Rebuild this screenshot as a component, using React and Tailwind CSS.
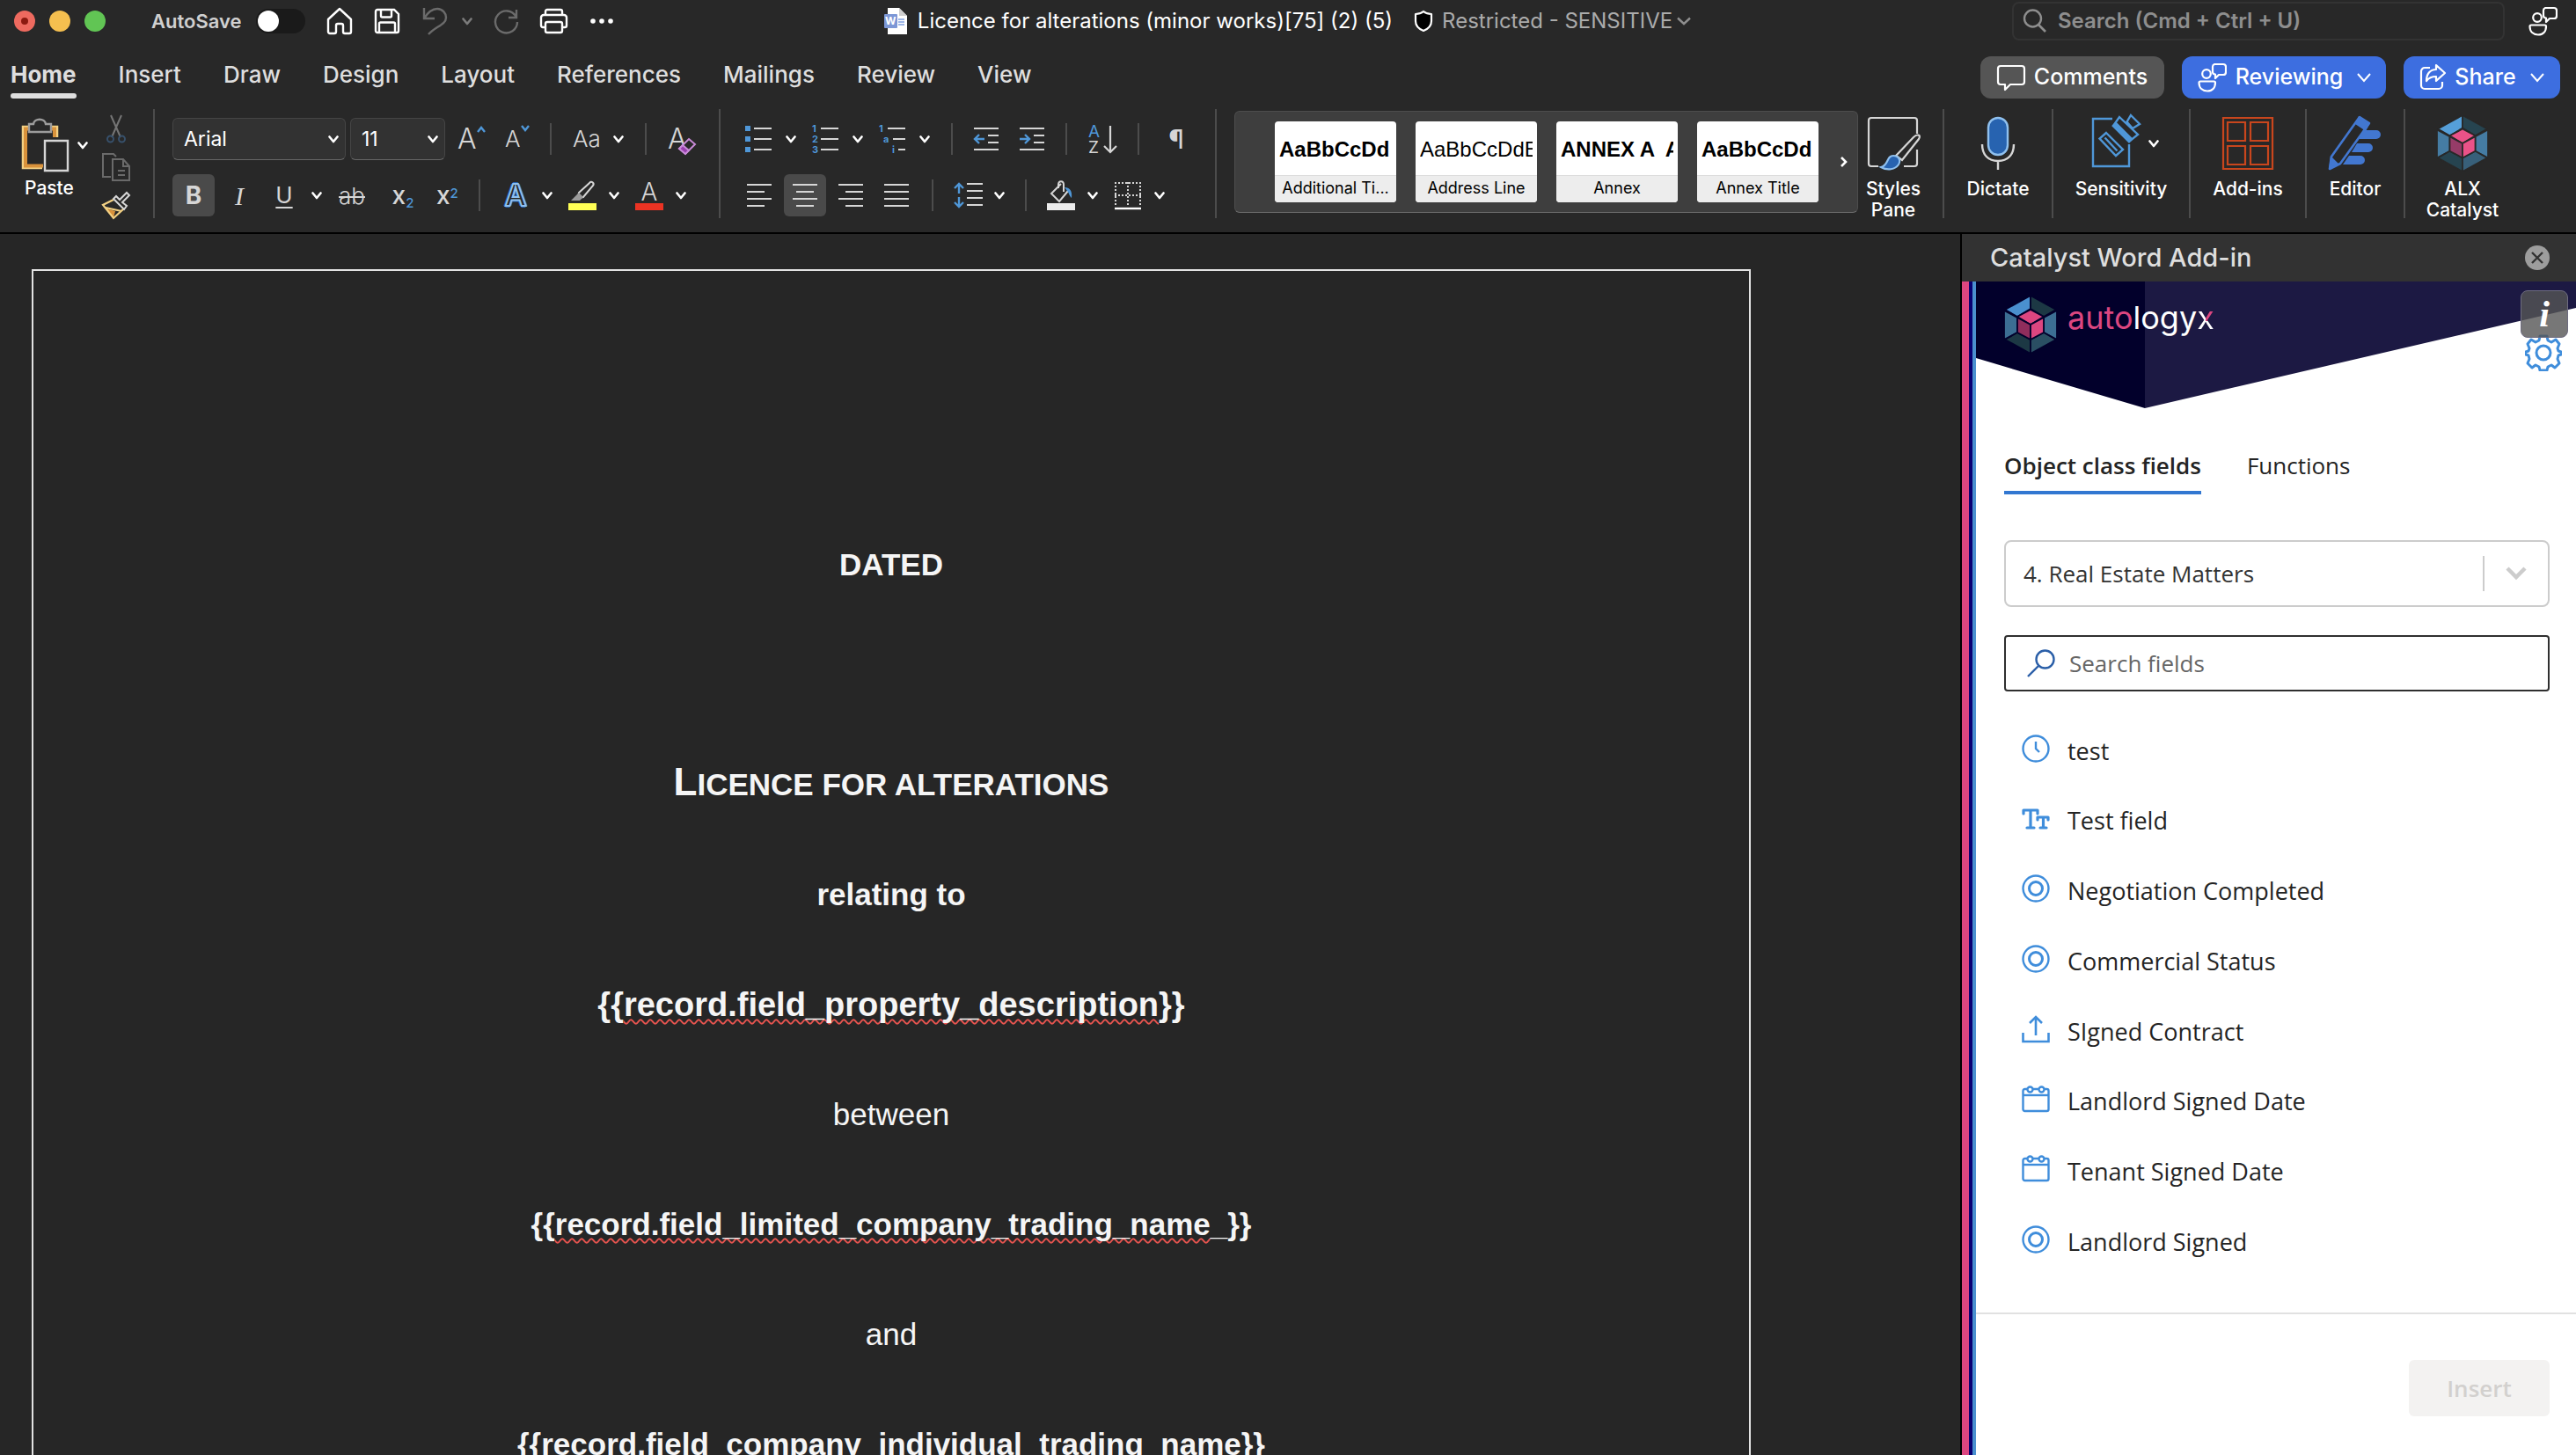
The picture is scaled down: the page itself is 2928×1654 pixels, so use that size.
import clsx from "clsx";

const BLUE = "#4f97d8";
const INK = "#d6d6d6";

/* ---------- shared bits ---------- */

const Chevron = ({ className = "text-white" }) => (
  <svg width="12" height="9" viewBox="0 0 12 9" className={clsx("shrink-0", className)}>
    <path d="M1.5 1.5 6 7l4.500-5.500" fill="none" stroke="currentColor" strokeWidth="2.600" strokeLinecap="round" strokeLinejoin="round" />
  </svg>
);

const Svg = ({ w = 32, h = 32, children, className }) => (
  <svg
    width={w}
    height={h}
    viewBox={`0 0 ${w} ${h}`}
    fill="none"
    stroke={INK}
    strokeWidth="2"
    className={clsx("shrink-0 overflow-visible", className)}
  >
    {children}
  </svg>
);

const Divider = ({ tall }) => (
  <div className={clsx("w-[2px] shrink-0 bg-[#4c4c4c]", tall ? "h-[124px]" : "h-9")} />
);

// icon button with its drop-down arrow
const Split = ({ label, children }) => (
  <button type="button" aria-label={label} className="flex items-center gap-[14px]">
    {children}
    <Chevron />
  </button>
);

const Gem = ({ w, h, gap, colors }) => {
  const [topLeft, topRight, side, low, lowRight, pink, plum] = colors;
  return (
    <svg width={w} height={h} viewBox="0 0 60 66" stroke={gap} strokeWidth="1.800" strokeLinejoin="round" className="shrink-0">
      <path d="M30 0 1 16l14 8 15-9z" fill={topLeft} />
      <path d="M30 0 59 16l-14 8-15-9z" fill={topRight} />
      <path d="M0 17v33l15-8V25z" fill={side} />
      <path d="M60 17v33l-15-8V25z" fill={side} />
      <path d="M1 50l14-8 15 8v16z" fill={low} />
      <path d="M59 50l-14-8-15 8v16z" fill={lowRight} />
      <path d="M30 16 45 24 30 33 15 24z" fill={pink} />
      <path d="M15 25l15 8v17l-15-8z" fill={plum} />
      <path d="M45 25l-15 8v17l15-8z" fill={pink} />
    </svg>
  );
};

const PeopleIcon = ({ className }) => (
  <svg width="34" height="34" viewBox="0 0 34 34" fill="none" stroke="white" strokeWidth="2.200" strokeLinejoin="round" className={className}>
    <circle cx="11" cy="13" r="4.800" />
    <path d="M4 21.500h15.500a1.500 1.500 0 0 1 1.500 1.500c0 6-3.500 9.500-9 9.500S2.500 29 2.500 23a1.500 1.500 0 0 1 1.500-1.500z" />
    <path d="M20 2h10a3 3 0 0 1 3 3v6a3 3 0 0 1-3 3h-5l-4 4v-4.500a3 3 0 0 1-3-3V5a3 3 0 0 1 2-3z" />
  </svg>
);

/* ---------- title bar ---------- */

const TitleBar = () => (
  <div className="grid h-12 grid-cols-[1fr_auto_1fr] items-center">
    <div className="flex items-center pl-4">
      <div className="flex gap-4">
        <span className="flex size-6 items-center justify-center rounded-full bg-[#ee6a5f]">
          <span className="size-2 rounded-full bg-[#8c1a10]" />
        </span>
        <span className="size-6 rounded-full bg-[#f5bf4f]" />
        <span className="size-6 rounded-full bg-[#61c554]" />
      </div>
      <label className="ml-[52px] flex items-center gap-4 text-[22px] font-semibold text-[#d0d0d0]">
        AutoSave
        <input
          type="checkbox"
          className="h-7 w-14 appearance-none rounded-full bg-[#1a1a1a] p-[2px] before:block before:size-6 before:rounded-full before:bg-white before:content-['']"
        />
      </label>
      <div className="ml-6 flex items-center gap-6">
        <button type="button" aria-label="Home">
          <Svg w={30}>
            <path d="M2 14 15 2l13 12v14a2 2 0 0 1-2 2h-5a2 2 0 0 1-2-2v-7a2 2 0 0 0-2-2h-4a2 2 0 0 0-2 2v7a2 2 0 0 1-2 2H4a2 2 0 0 1-2-2z" stroke="white" strokeWidth="2.400" strokeLinejoin="round" />
          </Svg>
        </button>
        <button type="button" aria-label="Save">
          <Svg w={30}>
            <path d="M4 3h19l5 5v19a2 2 0 0 1-2 2H4a2 2 0 0 1-2-2V5a2 2 0 0 1 2-2zM8 3v7a1.500 1.500 0 0 0 1.500 1.500h9A1.500 1.500 0 0 0 20 10V3M6 29V19a1.500 1.500 0 0 1 1.500-1.500h15A1.500 1.500 0 0 1 24 19v10" stroke="white" strokeWidth="2.400" />
          </Svg>
        </button>
        <div className="flex items-center gap-4">
          <button type="button" aria-label="Undo">
            <Svg w={30}>
              <path d="M3 1v12h12M3 13C8 5 13 2 18 2c6 0 10 5 10 10 0 8-12 10-20 19" stroke="#6b6b6b" strokeWidth="2.400" />
            </Svg>
          </button>
          <Chevron className="text-[#7b7b7b]" />
        </div>
        <button type="button" aria-label="Redo">
          <Svg w={28}>
            <path d="M26 3v9h-9M25.500 11A12.500 12.500 0 1 0 27 17" stroke="#6b6b6b" strokeWidth="2.400" />
          </Svg>
        </button>
        <button type="button" aria-label="Print">
          <Svg w={33}>
            <path d="M7 9V5a2 2 0 0 1 2-2h15a2 2 0 0 1 2 2v4M7 23H4a2 2 0 0 1-2-2v-9a3 3 0 0 1 3-3h23a3 3 0 0 1 3 3v9a2 2 0 0 1-2 2h-3M9 17h15a2 2 0 0 1 2 2v8a2 2 0 0 1-2 2H9a2 2 0 0 1-2-2v-8a2 2 0 0 1 2-2z" stroke="white" strokeWidth="2.400" />
          </Svg>
        </button>
        <button type="button" aria-label="More commands">
          <Svg w={28}>
            <g fill="white" stroke="none">
              <circle cx="4" cy="16" r="2.800" />
              <circle cx="14" cy="16" r="2.800" />
              <circle cx="24" cy="16" r="2.800" />
            </g>
          </Svg>
        </button>
      </div>
    </div>

    <div className="flex items-center text-[24px] whitespace-nowrap">
      <span className="relative h-[30px] w-[26px]">
        <svg width="26" height="30" viewBox="0 0 26 30">
          <path d="M4 0h13l9 9v21H4z" fill="white" />
          <path d="M17 0l9 9h-9z" fill="#cfcfcf" />
          <path d="M16 13h7M16 16h7M16 19h7" stroke="#7d9fe0" strokeWidth="1.500" />
          <rect y="7" width="15" height="16" rx="1" fill="#7c97d6" />
        </svg>
        <span className="absolute top-[7px] left-0 w-[15px] text-center text-[12px] leading-4 font-bold text-white">W</span>
      </span>
      <span className="ml-3 text-white">Licence for alterations (minor works)[75] (2) (5)</span>
      <Svg w={22} h={26} className="ml-6">
        <path d="M11 2c3 2.500 6 3 9 3v8c0 5-4 9-9 11-5-2-9-6-9-11V5c3 0 6-.500 9-3z" fill="black" stroke="white" strokeWidth="2.200" strokeLinejoin="round" />
      </Svg>
      <span className="ml-2.5 text-[#ababab]">Restricted - SENSITIVE</span>
      <Svg w={18} h={10} className="ml-1">
        <path d="M2 1.500 9 8l7-6.500" stroke="#8e8e8e" strokeWidth="2.400" />
      </Svg>
    </div>

    <div className="flex items-center justify-end pr-[21px]">
      <label className="flex h-11 w-[560px] items-center gap-3.5 rounded-lg border-2 border-[#333333] pl-2.5">
        <Svg w={26} h={28}>
          <circle cx="11.500" cy="11" r="9.500" stroke="#8e8e8e" strokeWidth="2.400" />
          <path d="M18 18l8 8" stroke="#8e8e8e" strokeWidth="2.600" />
        </Svg>
        <input
          type="search"
          aria-label="Search"
          placeholder="Search (Cmd + Ctrl + U)"
          className="w-full bg-transparent text-[24px] font-semibold outline-none placeholder:text-[#8e8e8e]"
        />
      </label>
      <button type="button" aria-label="Presence" className="ml-[26px]">
        <PeopleIcon />
      </button>
    </div>
  </div>
);

/* ---------- ribbon tabs ---------- */

const tabs = ["Home", "Insert", "Draw", "Design", "Layout", "References", "Mailings", "Review", "View"];

const TabBar = () => (
  <div className="mt-4 flex h-12 items-center justify-between pr-[18px] pl-3">
    <nav className="flex h-12 gap-12 text-[26px] font-medium text-[#dedede]">
      {tabs.map((tab, i) => (
        <a
          key={tab}
          href={`#${tab.toLowerCase()}`}
          className={clsx("flex flex-col justify-between pt-1.5", i === 0 && "font-bold")}
        >
          <span className="leading-[30px]">{tab}</span>
          {i === 0 && <span className="h-1.5 rounded-full bg-[#dedede]" />}
        </a>
      ))}
    </nav>
    <div className="flex gap-5 text-[25px] font-medium text-white">
      <button type="button" className="flex h-12 w-[209px] items-center justify-center gap-2.5 rounded-xl bg-[#555555]">
        <Svg w={32}>
          <path d="M4 3h24a3 3 0 0 1 3 3v15a3 3 0 0 1-3 3H15l-6 6v-6H4a3 3 0 0 1-3-3V6a3 3 0 0 1 3-3z" stroke="white" strokeWidth="2.200" strokeLinejoin="round" />
        </Svg>
        Comments
      </button>
      <button type="button" className="flex h-12 w-[232px] items-center justify-center gap-2.5 rounded-xl bg-[#3d6ee0]">
        <PeopleIcon />
        Reviewing
        <Svg w={16} h={10} className="ml-1.5">
          <path d="M1 1l7 8 7-8" stroke="white" />
        </Svg>
      </button>
      <button type="button" className="flex h-12 w-[178px] items-center justify-center gap-2.5 rounded-xl bg-[#3d6ee0]">
        <Svg w={30}>
          <path d="M12 5H6a4 4 0 0 0-4 4v16a4 4 0 0 0 4 4h16a4 4 0 0 0 4-4v-4" stroke="white" strokeWidth="2.200" />
          <path d="M19 2l10 9-10 9v-5c-5 0-8 1-11 5 0-8 4-13 11-13z" stroke="white" strokeWidth="2.200" strokeLinejoin="round" />
        </Svg>
        Share
        <Svg w={16} h={10} className="ml-1.5">
          <path d="M1 1l7 8 7-8" stroke="white" />
        </Svg>
      </button>
    </div>
  </div>
);

/* ---------- ribbon groups ---------- */

const ClipboardGroup = () => (
  <div className="flex gap-4">
    <button type="button" className="flex flex-col pt-2.5 text-left text-[21px] font-medium text-white">
      <span className="flex items-center gap-2.5">
        <Svg w={54} h={62}>
          <path d="M9 10H2v47h22M34 10h7v12" stroke="#f3d184" strokeWidth="2.500" />
          <path d="M9 12.500H5v42h20M34 12.500h4V22" stroke="#d9923b" strokeWidth="4" />
          <path d="M9 7h5c1-7 13-7 14 0h6v9H9z" stroke="#9c9c9c" strokeWidth="2.400" />
          <path d="M27 26h26v34H27z" strokeWidth="2.400" />
        </Svg>
        <Chevron />
      </span>
      <span className="pl-1 leading-9">Paste</span>
    </button>
    <div className="flex flex-col gap-3 pt-1.5">
      <button type="button" aria-label="Cut">
        <Svg>
          <path d="M10 1l11 25M22 1 11 26" stroke="#757575" />
          <circle cx="9.500" cy="28" r="3.500" stroke="#37506b" />
          <circle cx="22.500" cy="28" r="3.500" stroke="#37506b" />
        </Svg>
      </button>
      <button type="button" aria-label="Copy">
        <Svg>
          <path d="M16 4l-3-3H1v26h9M12 7h12l7 8v16H12zM24 7v8h7M18 20h8M18 25h8" stroke="#6a6a6a" />
        </Svg>
      </button>
      <button type="button" aria-label="Format painter">
        <Svg>
          <path d="M5 19l10 3-2 8z" fill="#d9923b" stroke="none" />
          <path d="M13 9 1 15l12 15 12-11M4 18l18 4" stroke="#f3d184" strokeWidth="2.200" />
          <path d="M13 8l12 12 3-4-5-4 8-8-3-3-8 8-4-4z" />
        </Svg>
      </button>
    </div>
  </div>
);

const selectBox = "h-12 appearance-none rounded-md border border-[#454545] border-b-[#666666] bg-[#323232] pl-3 text-[23px] text-white";

const Picker = ({ label, value, className }) => (
  <span className="relative flex items-center">
    <select aria-label={label} defaultValue={value} className={clsx(selectBox, className)}>
      <option>{value}</option>
    </select>
    <span className="pointer-events-none absolute right-2">
      <Chevron />
    </span>
  </span>
);

const FontGroup = () => (
  <div className="flex flex-col gap-4 pt-2.5">
    <div className="flex h-12 items-center gap-[14px]">
      <div className="flex gap-[5px]">
        <Picker label="Font" value="Arial" className="w-[197px]" />
        <Picker label="Font size" value="11" className="w-[108px]" />
      </div>
      <div className="flex items-center gap-6 text-[#d6d6d6]">
        <button type="button" aria-label="Increase font size" className="flex w-[30px] items-start justify-between">
          <span className="text-[32px] leading-9 font-light">A</span>
          <Svg w={10} h={8} className="mt-1">
            <path d="M1 6l4-5 4 5" stroke={BLUE} strokeWidth="2.400" />
          </Svg>
        </button>
        <button type="button" aria-label="Decrease font size" className="flex w-[27px] items-start justify-between">
          <span className="text-[26px] leading-10 font-light">A</span>
          <Svg w={10} h={8} className="mt-1">
            <path d="M1 1l4 5 4-5" stroke={BLUE} strokeWidth="2.400" />
          </Svg>
        </button>
        <Divider />
        <Split label="Change case">
          <span className="w-8 text-[26px] leading-9 font-light">Aa</span>
        </Split>
        <Divider />
        <button type="button" aria-label="Clear formatting" className="relative flex h-9 w-8">
          <span className="text-[32px] leading-9 font-light">A</span>
          <span className="absolute right-0 bottom-0">
            <Svg w={20} h={20}>
              <path d="M12 2l7 6-11 11-7-6z" fill="#282828" stroke="#c98bd8" />
              <path d="M5 9l7 6-4 4-7-6z" fill="#9a3fb0" stroke="#c98bd8" />
            </Svg>
          </span>
        </button>
      </div>
    </div>
    <div className="flex h-12 items-center gap-[18px] text-[28px] text-[#d6d6d6]">
      <button type="button" aria-label="Bold" className="h-12 w-12 rounded-md bg-[#4a4a4a] text-[28px] font-bold">
        B
      </button>
      <button type="button" aria-label="Italic" className="w-5 font-['Liberation_Serif'] text-[30px] italic">
        I
      </button>
      <Split label="Underline">
        <span className="w-10 pl-1.5 text-center text-[26px] leading-8 underline decoration-2 underline-offset-4">U</span>
      </Split>
      <button type="button" aria-label="Strikethrough" className="w-8 text-[26px] font-light line-through decoration-2">
        ab
      </button>
      <button type="button" aria-label="Subscript" className="w-11 pl-1 font-medium">
        x<sub className="text-[15px] text-[#4f97d8]">2</sub>
      </button>
      <button type="button" aria-label="Superscript" className="w-[30px] text-left font-medium">
        x<sup className="text-[15px] text-[#4f97d8]">2</sup>
      </button>
      <div className="mr-1.5">
        <Divider />
      </div>
      <Split label="Text effects">
        <span className="w-8 text-center text-[34px] leading-8 font-semibold text-[#282828] [-webkit-text-stroke:2px_#8fc0ee] [text-shadow:2px_0_#2763b0,-2px_0_#2763b0,0_2px_#2763b0,0_-2px_#2763b0]">
          A
        </span>
      </Split>
      <Split label="Highlight colour">
        <Svg w={32} h={34}>
          <path d="M12 14 24 3c2-3 6 0 4 3L17 19l-6 1z" />
          <path d="M12 14l5 5-4 4H3z" fill="#9b9b9b" stroke="none" />
          <path d="M0 26h32v8H0z" fill="#ffff54" stroke="none" />
        </Svg>
      </Split>
      <Split label="Font colour">
        <span className="flex w-8 flex-col items-center">
          <span className="text-[28px] leading-[26px] font-light">A</span>
          <span className="h-2 w-8 bg-[#eb3323]" />
        </span>
      </Split>
    </div>
  </div>
);

const alignments = [
  ["Align left", "M0 2h28M0 10h20M0 18h28M0 26h20"],
  ["Centre", "M0 2h28M4 10h20M0 18h28M4 26h20"],
  ["Align right", "M0 2h28M8 10h20M0 18h28M8 26h20"],
  ["Justify", "M0 2h28M0 10h28M0 18h28M0 26h28"],
];

const ListMarks = ({ marks }) => (
  <g fill={BLUE} stroke="none" fontSize="11" fontWeight="700">
    {marks.map(([mark, x, y]) => (
      <text key={mark} x={x} y={y}>
        {mark}
      </text>
    ))}
  </g>
);

const ParagraphGroup = () => (
  <div className="flex flex-col gap-4 pt-2.5">
    <div className="flex h-12 items-center gap-6">
      <div className="flex gap-[18px]">
        <Split label="Bullets">
          <Svg>
            <path d="M0 1h6v6H0zM0 13h6v6H0zM0 25h6v6H0z" fill={BLUE} stroke="none" />
            <path d="M10 4h20M10 16h20M10 28h20" />
          </Svg>
        </Split>
        <Split label="Numbering">
          <Svg>
            <ListMarks marks={[["1", 0, 8], ["2", 0, 20], ["3", 0, 32]]} />
            <path d="M10 4h20M10 16h20M10 28h20" />
          </Svg>
        </Split>
        <Split label="Multilevel list">
          <Svg>
            <ListMarks marks={[["1", 0, 8], ["a", 5, 20], ["i", 15, 32]]} />
            <path d="M10 4h20M16 16h14M22 28h8" />
          </Svg>
        </Split>
      </div>
      <Divider />
      <button type="button" aria-label="Decrease indent">
        <Svg w={28}>
          <path d="M0 4h28M16 12h12M16 20h12M0 28h28" />
          <path d="M12 16H1M6 11l-5 5 5 5" stroke={BLUE} strokeWidth="2.400" />
        </Svg>
      </button>
      <button type="button" aria-label="Increase indent">
        <Svg w={28}>
          <path d="M0 4h28M16 12h12M16 20h12M0 28h28" />
          <path d="M0 16h11M6 11l5 5-5 5" stroke={BLUE} strokeWidth="2.400" />
        </Svg>
      </button>
      <Divider />
      <button type="button" aria-label="Sort">
        <Svg w={32} h={34}>
          <g stroke="none" fontSize="19">
            <text x="0" y="15" fill={BLUE}>A</text>
            <text x="0" y="33" fill={INK}>Z</text>
          </g>
          <path d="M25 2v30M18 25l7 7 7-7" strokeWidth="2.200" />
        </Svg>
      </button>
      <Divider />
      <button type="button" aria-label="Show formatting marks" className="w-9 text-[30px] leading-9 text-[#d6d6d6]">
        ¶
      </button>
    </div>
    <div className="-ml-2 flex h-12 items-center gap-4">
      <div className="flex gap-1">
        {alignments.map(([name, d]) => (
          <button
            key={name}
            type="button"
            aria-label={name}
            className={clsx("flex size-12 items-center justify-center rounded-md", name === "Centre" && "bg-[#4a4a4a]")}
          >
            <Svg w={28} h={28}>
              <path d={d} />
            </Svg>
          </button>
        ))}
      </div>
      <div className="flex items-center gap-[23px]">
        <Divider />
        <Split label="Line spacing">
          <Svg>
            <path d="M6 3v11M1 8l5-5 5 5M6 18v11M1 24l5 5 5-5" stroke={BLUE} strokeWidth="2.400" />
            <path d="M15 3h18M15 11h18M15 19h18M15 27h18" />
          </Svg>
        </Split>
        <Divider />
        <div className="flex gap-[18px]">
          <Split label="Shading">
            <Svg w={32} h={34}>
              <path d="M16 4 5 15l9 9 10-12M13 9V5c0-5 6-5 6 0v8" />
              <path d="M20 8c6 0 9 4 8 12-3-3-3-6-5-8z" fill={BLUE} stroke="none" />
              <path d="M0 26h32v8H0z" fill="#ececec" stroke="none" />
            </Svg>
          </Split>
          <Split label="Borders">
            <Svg>
              <path d="M1 2h30M1 16h30M2 1v26M16 1v26M30 1v26" strokeDasharray="2 2" />
              <path d="M1 31h30" stroke="white" strokeWidth="2.400" />
            </Svg>
          </Split>
        </div>
      </div>
    </div>
  </div>
);

const styles = [
  { name: "Additional Ti...", sample: "AaBbCcDd", bold: true },
  { name: "Address Line", sample: "AaBbCcDdEe" },
  { name: "Annex", sample: "ANNEX A  A", bold: true },
  { name: "Annex Title", sample: "AaBbCcDd", bold: true },
];

const StyleGallery = () => (
  <div className="mt-[2px] mr-2 ml-5 flex h-[116px] flex-1 items-center justify-between rounded-md border border-[#4d4d4d] border-b-[#6a6a6a] bg-[#3e3e3e] pr-2.5 pl-[45px]">
    <div className="flex gap-[22px]">
      {styles.map(({ name, sample, bold }) => (
        <button key={name} type="button" className="flex h-[92px] w-[138px] flex-col rounded-sm bg-white text-black">
          <span
            className={clsx(
              "mx-[5px] h-[61px] overflow-hidden pt-4 text-left font-['Liberation_Sans'] text-[24px] leading-[32px] whitespace-pre",
              bold && "font-bold",
            )}
          >
            {sample}
          </span>
          <span className="w-full flex-1 rounded-b-sm border-t border-[#dddddd] bg-[#ededed] text-[18px] leading-[28px]">{name}</span>
        </button>
      ))}
    </div>
    <button type="button" aria-label="More styles">
      <Svg w={10} h={14}>
        <path d="M2 2l5 5-5 5" stroke="white" strokeWidth="2.600" />
      </Svg>
    </button>
  </div>
);

const BigButton = ({ icon, label, className }) => (
  <button
    type="button"
    className={clsx("flex flex-col items-center pt-1.5 text-[21px] leading-6 font-medium text-white", className)}
  >
    <span className="mb-[7px] flex h-[66px] items-center gap-2.5">{icon}</span>
    {label}
  </button>
);

const ribbonGem = ["#559fd9", "#264450", "#457ca3", "#264450", "#38607a", "#ea5288", "#963c68"];
const logoGem = ["#4a90cf", "#1c3844", "#3c6e93", "#1c3844", "#2a4f63", "#dc4680", "#8f2d5c"];

const ToolButtons = () => (
  <div className="flex gap-6 pr-[88px]">
    <BigButton
      className="w-16"
      label="Styles Pane"
      icon={
        <Svg w={62} h={62}>
          <path d="M14 57H6a3 3 0 0 1-3-3V5a3 3 0 0 1 3-3h49a3 3 0 0 1 3 3v15M58 38v16a3 3 0 0 1-3 3H43" strokeWidth="2.200" />
          <path d="M34 45l20-21c4-4 9-3 6 2L41 50z" strokeWidth="2.200" />
          <path d="M17 58c9-2 6-13 14-13 6 0 9 5 6 10-4 6-13 7-20 3z" fill="#2763b0" stroke="#8fc0ee" strokeWidth="2.200" />
        </Svg>
      }
    />
    <Divider tall />
    <BigButton
      className="w-[74px]"
      label="Dictate"
      icon={
        <Svg w={40} h={62}>
          <rect x="9" y="2" width="22" height="42" rx="11" fill="#2763b0" stroke="#8fc0ee" strokeWidth="2.400" />
          <path d="M2 32c0 12 7 19 18 19s18-7 18-19M20 51v10" strokeWidth="2.400" />
        </Svg>
      }
    />
    <Divider tall />
    <BigButton
      className="w-[106px]"
      label="Sensitivity"
      icon={
        <>
          <Svg w={54} h={64} className="ml-2.5">
            <g stroke={BLUE} strokeWidth="2.400">
              <path d="M23 4H1v54h41V33" />
              <path d="M16 20 35 39l-8 7L8.500 26.500zM14.500 25.500 28.500 40.500" />
              <path d="M31 2 52 22l-10 8L24 12zM44 0l10 10-8 5-6.500-7.500z" />
              <path d="M24 12l3-3 18 18-3 3z" fill={BLUE} />
            </g>
          </Svg>
          <Chevron />
        </>
      }
    />
    <Divider tall />
    <BigButton
      className="w-[82px]"
      label="Add-ins"
      icon={
        <Svg w={58} h={60}>
          <path d="M1 1h56v58H1zM6 6h20v21H6zM32 6h20v21H32zM6 33h20v21H6zM32 33h20v21H32z" stroke="#c9461d" strokeWidth="2.200" />
        </Svg>
      }
    />
    <Divider tall />
    <BigButton
      className="w-[62px]"
      label="Editor"
      icon={
        <Svg w={62} h={64}>
          <g stroke="none" fill="#4277d0">
            <path d="M40 17h15a5 5 0 0 1 0 10H35zM33 32h13a5 5 0 0 1 0 10H27zM24 46h13a5 5 0 0 1 0 10H17z" />
            <path d="M35 1 48 9l-5 9-12-8zM1 62l2-16 10 10z" />
          </g>
          <path d="M36 2l11 7-33 46L2 61l2-14z" stroke="#4277d0" strokeWidth="2.600" strokeLinejoin="round" />
        </Svg>
      }
    />
    <Divider tall />
    <BigButton className="w-[82px]" label="ALX Catalyst" icon={<Gem w={58} h={64} gap="#282828" colors={ribbonGem} />} />
  </div>
);

const Ribbon = () => (
  <div className="flex h-[152px] items-start pt-3 pl-6">
    <ClipboardGroup />
    <div className="mr-5 ml-[26px]">
      <Divider tall />
    </div>
    <FontGroup />
    <div className="mr-7 ml-[26px]">
      <Divider tall />
    </div>
    <ParagraphGroup />
    <div className="ml-[26px]">
      <Divider tall />
    </div>
    <StyleGallery />
    <ToolButtons />
  </div>
);

/* ---------- document ---------- */

const Misspelt = ({ children }) => (
  <span className="underline decoration-[#e8544f] decoration-wavy decoration-2 underline-offset-[3px] [text-decoration-skip-ink:none]">
    {children}
  </span>
);

const Document = () => (
  <main className="flex flex-1 overflow-hidden bg-[#262626] pt-10 pr-[238px] pl-9">
    <article className="flex flex-1 flex-col items-center gap-[85px] border-2 border-b-0 border-[#e2e2e2] pt-[314px] font-['Liberation_Sans'] text-[35px] leading-10 whitespace-nowrap text-[#f5f5f5]">
      <h1 className="mb-[122px] font-bold">DATED</h1>
      <h2 className="font-bold">
        <span className="text-[44px] leading-10">L</span>ICENCE FOR ALTERATIONS
      </h2>
      <p className="font-bold">relating to</p>
      <p className="text-[38px] font-bold">
        {"{{"}
        <Misspelt>record.field_property_description</Misspelt>
        {"}}"}
      </p>
      <p>between</p>
      <p className="font-bold">
        {"{{"}
        <Misspelt>record.field_limited_company_trading_name</Misspelt>
        {"_}}"}
      </p>
      <p>and</p>
      <p className="font-bold">
        {"{{"}
        <Misspelt>record.field_company_individual_trading_name</Misspelt>
        {"}}"}
      </p>
    </article>
  </main>
);

/* ---------- add-in pane ---------- */

const fieldIcons = {
  time: (
    <>
      <circle cx="16" cy="16" r="14.500" />
      <path d="M16 8v8l4 4" />
    </>
  ),
  text: (
    <path d="M2 10V6h16v4M10 6v20M6 26h8M18 17v-3h12v3M24.500 14v12M21 26h7" strokeWidth="3.200" strokeLinejoin="round" strokeLinecap="round" />
  ),
  status: (
    <>
      <circle cx="16" cy="16" r="14.500" />
      <circle cx="16" cy="16" r="7.500" strokeWidth="3" />
    </>
  ),
  file: <path d="M1.500 20v10h29V20M16 23V3M9 9l7-7 7 7" strokeWidth="2.600" />,
  date: (
    <>
      <rect x="1.500" y="4" width="29" height="25" rx="2" />
      <path d="M2 11h28" />
      <circle cx="9.500" cy="4.500" r="3" fill="white" />
      <circle cx="22.500" cy="4.500" r="3" fill="white" />
    </>
  ),
};

const fields = [
  ["test", "time"],
  ["Test field", "text"],
  ["Negotiation Completed", "status"],
  ["Commercial Status", "status"],
  ["SIgned Contract", "file"],
  ["Landlord Signed Date", "date"],
  ["Tenant Signed Date", "date"],
  ["Landlord Signed", "status"],
];

const PaneBanner = () => (
  <div className="relative h-36 shrink-0">
    <svg viewBox="0 0 682 144" preserveAspectRatio="none" className="absolute inset-0 h-full w-full">
      <path d="M0 0h192v144L0 87z" fill="#02002b" />
      <path d="M192 0h490v30L192 144z" fill="#1c1943" />
    </svg>
    <div className="relative flex gap-3 pt-4 pl-8">
      <Gem w={60} h={66} gap="#02002b" colors={logoGem} />
      <span className="font-['Inter'] text-[36px] leading-[50px] text-white">
        <span className="text-[#dc4680]">auto</span>logy
        <span className="bg-[conic-gradient(at_50%_60%,#dc4680_25%,white_0)] bg-clip-text text-transparent">x</span>
      </span>
    </div>
    <button type="button" aria-label="Settings" className="absolute top-[60px] right-4">
      <svg width="42" height="42" viewBox="0 0 42 42" fill="none" stroke="#3f8ddb" strokeWidth="3" strokeLinejoin="round">
        <path d="M17 2h8l1 5 4 2 5-3 4 5-2 5 1 3 3 1v3l-3 1-1 4 2 5-5 5-4-3-4 2-1 4h-8l-1-4-4-2-4 3-5-5 2-5-1-4-3-1v-3l3-1 1-3-2-5 4-5 5 3 4-2z" />
        <circle cx="21" cy="21" r="8" />
      </svg>
    </button>
    <button
      type="button"
      aria-label="Information"
      className="absolute top-2.5 right-[9px] h-[54px] w-[54px] rounded-lg border border-[#6e6c80] bg-[#555555]/80 font-['Liberation_Serif'] text-[42px] leading-[50px] font-bold text-white italic"
    >
      i
    </button>
  </div>
);

const AddInPane = () => (
  <aside className="flex w-[700px] shrink-0 flex-col border-l-2 border-black">
    <header className="flex h-[54px] shrink-0 items-center justify-between bg-[#323232] pr-[30px] pl-8 text-[29px] font-medium text-[#dedede]">
      Catalyst Word Add-in
      <button type="button" aria-label="Close" className="flex size-7 items-center justify-center rounded-full bg-[#9d9d9d]">
        <Svg w={14} h={14}>
          <path d="M1 1l12 12M13 1 1 13" stroke="#323232" strokeWidth="2.400" />
        </Svg>
      </button>
    </header>
    <div className="flex flex-1">
      <div className="w-2 bg-[#dc4680]" />
      <div className="w-1 bg-[#090072]" />
      <div className="w-1 bg-[#4a90cf]" />
      <div className="flex flex-1 flex-col bg-white font-['Open_Sans',sans-serif] text-[26px] text-[#242424]">
        <PaneBanner />
        <div className="flex flex-1 flex-col pt-9 pr-[30px] pl-8">
          <div role="tablist" className="flex gap-[52px]">
            <button type="button" role="tab" aria-selected="true" className="h-[62px] border-b-4 border-[#3277d1] font-semibold">
              Object class fields
            </button>
            <button type="button" role="tab" aria-selected="false" className="h-[62px] border-b-4 border-transparent">
              Functions
            </button>
          </div>
          <div className="relative mt-[52px]">
            <select
              aria-label="Object class"
              defaultValue="4. Real Estate Matters"
              className="h-[76px] w-full appearance-none rounded-lg border-2 border-[#cccccc] bg-white pl-5 text-[#333333]"
            >
              <option>4. Real Estate Matters</option>
            </select>
            <div className="pointer-events-none absolute inset-y-4 right-[26px] flex items-center gap-6">
              <div className="h-10 w-[2px] bg-[#cccccc]" />
              <Svg w={24} h={16}>
                <path d="M2 2l10 10L22 2" stroke="#cccccc" strokeWidth="4.500" />
              </Svg>
            </div>
          </div>
          <label className="mt-8 flex h-16 shrink-0 items-center gap-4 rounded-sm border-2 border-[#2f2f2f] pl-6">
            <Svg>
              <circle cx="20.500" cy="11.500" r="10" stroke="#2b5fa8" strokeWidth="2.400" />
              <path d="M13 19 1 31" stroke="#2b5fa8" strokeWidth="2.400" />
            </Svg>
            <input
              type="search"
              aria-label="Search fields"
              placeholder="Search fields"
              className="w-full bg-transparent outline-none placeholder:text-[#666666]"
            />
          </label>
          <ul className="mt-7 mb-10 flex flex-1 flex-col pl-5 text-[27px]">
            {fields.map(([name, type]) => (
              <li key={name} className="flex flex-1 items-center gap-5">
                <svg width="32" height="32" viewBox="0 0 32 32" fill="none" stroke="#3f8ddb" strokeWidth="2.400" className="mb-1.5">
                  {fieldIcons[type]}
                </svg>
                {name}
              </li>
            ))}
          </ul>
        </div>
        <footer className="flex justify-end border-t-2 border-[#e1e1e1] pt-[52px] pr-[30px] pb-11">
          <button type="button" disabled className="h-16 w-40 rounded-md bg-[#f3f2f1] font-semibold text-[#d2d0ce]">
            Insert
          </button>
        </footer>
      </div>
    </div>
  </aside>
);

export default function App() {
  return (
    <div className="flex h-screen flex-col overflow-hidden bg-[#282828] font-['Inter',sans-serif]">
      <header className="shrink-0 border-b-2 border-black">
        <TitleBar />
        <TabBar />
        <Ribbon />
      </header>
      <div className="flex min-h-0 flex-1">
        <Document />
        <AddInPane />
      </div>
    </div>
  );
}
